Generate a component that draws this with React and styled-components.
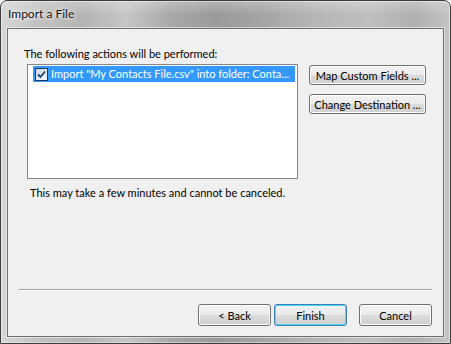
import React from 'react';
import styled, { createGlobalStyle, css } from 'styled-components';

const Global = createGlobalStyle`
    html, body {
        margin: 0;
        padding: 0;
        background: #ffffff;
    }
    body {
        font-family: "Segoe UI", Lato, "Noto Sans", sans-serif;
    }
`;

const Window = () => {
    return (
        <Frame>
            <TitleBar>Import a File</TitleBar>
            <Client>
                <Label>The following actions will be performed:</Label>
                <Body>
                    <List>
                        <Row selected>
                            <Check>
                                <svg width='9' height='9' viewBox='0 0 9 9'>
                                    <path d='M1 4.5 L3.5 7 L8 1.5' fill='none' stroke='#1f3f6b' strokeWidth='1.8' />
                                </svg>
                            </Check>
                            <span>Import "My Contacts File.csv" into folder: Conta...</span>
                        </Row>
                    </List>
                    <Side>
                        <Button>Map Custom Fields ...</Button>
                        <Button>Change Destination ...</Button>
                    </Side>
                </Body>
                <Note>This may take a few minutes and cannot be canceled.</Note>
                <Separator />
                <Footer>
                    <Button wide>&lt; Back</Button>
                    <Button wide focused>Finish</Button>
                    <Gap />
                    <Button wide>Cancel</Button>
                </Footer>
            </Client>
        </Frame>
    );
}

const Frame = styled.div`
    box-sizing: border-box;
    width: 451px;
    height: 344px;
    border: 1px solid #3c3c3c;
    border-radius: 7px 7px 0 0;
    padding: 0 6px 6px 6px;
    display: flex;
    flex-direction: column;
    background:
        linear-gradient(to bottom, rgba(255,255,255,0.25) 0px, rgba(255,255,255,0) 14px),
        linear-gradient(to right, #d6d6d6 0%, #c2c2c2 8%, #b4b4b4 18%, #c6c6c6 28%, #a8a8a8 38%, #9a9a9a 48%, #a4a4a4 58%, #b6b6b6 70%, #bfbfbf 82%, #b0b0b0 92%, #c4c4c4 100%);
    box-shadow: inset 0 0 0 1px rgba(255,255,255,0.45);
`;

const TitleBar = styled.div`
    height: 27px;
    flex: none;
    display: flex;
    align-items: center;
    padding-left: 1px;
    padding-bottom: 2px;
    box-sizing: border-box;
    font-size: 12px;
    color: #101010;
    text-shadow: 0 0 6px #ffffff, 0 0 3px #ffffff;
`;

const Client = styled.div`
    flex: 1;
    display: flex;
    flex-direction: column;
    background: #f0f0f0;
    border: 1px solid #707070;
    box-shadow: 0 0 0 1px rgba(255,255,255,0.5);
    font-size: 11px;
    color: #000000;
`;

const Label = styled.div`
    margin: 17px 0 0 16px;
    line-height: 15px;
`;

const Body = styled.div`
    display: flex;
    align-items: flex-start;
    margin: 3px 0 0 19px;
    gap: 11px;
`;

const List = styled.div`
    box-sizing: border-box;
    width: 271px;
    height: 115px;
    border: 1px solid #828790;
    background: #ffffff;
    padding: 1px 2px 0 5px;
`;

const Row = styled.div`
    height: 16px;
    display: flex;
    align-items: center;
    gap: 3px;
    padding-left: 2px;
    white-space: nowrap;
    overflow: hidden;
    line-height: 16px;
    ${p => p.selected && css`
        background: #3399ff;
        color: #ffffff;
    `}
`;

const Check = styled.span`
    box-sizing: border-box;
    width: 13px;
    height: 13px;
    flex: none;
    border: 1px solid #1c3a5e;
    background: linear-gradient(135deg, #c9d7e6, #f4f7fb);
    display: flex;
    align-items: center;
    justify-content: center;
`;

const Side = styled.div`
    display: flex;
    flex-direction: column;
    gap: 9px;
    margin-top: 1px;
`;

const Button = styled.button`
    box-sizing: border-box;
    width: ${p => (p.wide ? '73px' : '117px')};
    height: ${p => (p.wide ? '22px' : '20px')};
    padding: 0;
    white-space: nowrap;
    font-family: inherit;
    font-size: 11px;
    color: #000000;
    border: 1px solid #707070;
    border-radius: 3px;
    background: linear-gradient(to bottom, #f2f2f2 0%, #ebebeb 49%, #dddddd 50%, #cfcfcf 100%);
    box-shadow: inset 0 0 0 1px #fcfcfc;
    ${p => p.focused && css`
        border-color: #3c7fb1;
        box-shadow: inset 0 0 0 1px #48d8fb;
    `}
`;

const Note = styled.div`
    margin: 6px 0 0 22px;
    line-height: 15px;
`;

const Separator = styled.div`
    margin: auto 11px 0 11px;
    height: 1px;
    background: #a0a0a0;
    border-bottom: 1px solid #ffffff;
`;

const Footer = styled.div`
    display: flex;
    justify-content: flex-end;
    gap: 3px;
    padding: 13px 11px 10px 0;
`;

const Gap = styled.span`
    width: 6px;
`;

export default function App() {
    return (
        <>
            <Global />
            <Window />
        </>
    );
}
